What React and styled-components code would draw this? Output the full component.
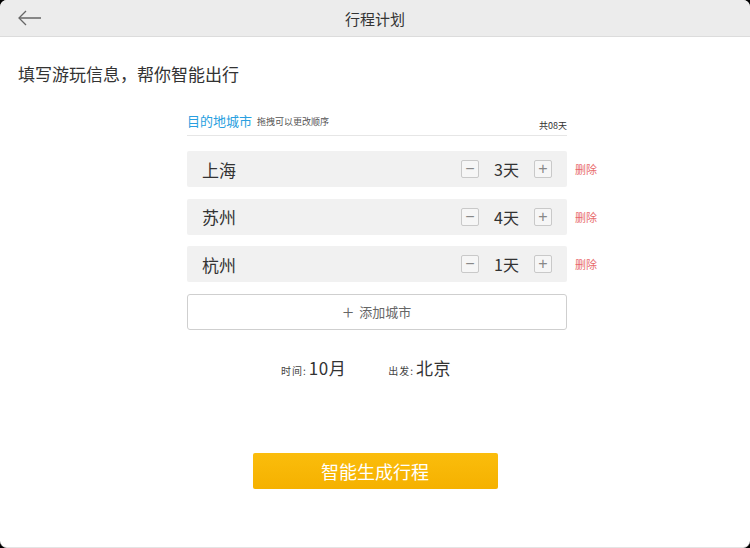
import styled, { createGlobalStyle } from 'styled-components';

const Global = createGlobalStyle`
  html, body { margin: 0; padding: 0; background: #000; }
  * { box-sizing: border-box; }
  body { font-family: "Noto Sans CJK SC", "Liberation Sans", sans-serif; }
`;

const cities = [
  { name: '上海', days: 3 },
  { name: '苏州', days: 4 },
  { name: '杭州', days: 1 },
];

export default function App() {
  return (
    <>
      <Global />
      <Screen>
        <Header>
          <Back>
            <svg width="24" height="16" viewBox="0 0 24 16" fill="none" stroke="#666" strokeWidth="1.3">
              <path d="M1 8 H23" />
              <path d="M8 1 L1 8 L8 15" />
            </svg>
          </Back>
          <Title>行程计划</Title>
        </Header>

        <Intro>填写游玩信息，帮你智能出行</Intro>

        <Column>
          <SectionHead>
            <Label>目的地城市</Label>
            <Hint>拖拽可以更改顺序</Hint>
            <Total>共08天</Total>
          </SectionHead>

          <List>
            {cities.map(c => (
              <RowWrap key={c.name}>
                <CityRow>
                  <CityName>{c.name}</CityName>
                  <Stepper>
                    <StepBtn>−</StepBtn>
                    <Days>{c.days}天</Days>
                    <StepBtn>+</StepBtn>
                  </Stepper>
                </CityRow>
                <Delete>删除</Delete>
              </RowWrap>
            ))}
            <AddCity><span className="plus">+</span>添加城市</AddCity>
          </List>

          <Meta>
            <MetaItem><small>时间:</small>10月</MetaItem>
            <MetaItem><small>出发:</small>北京</MetaItem>
          </Meta>
        </Column>

        <Footer>
          <Generate>智能生成行程</Generate>
        </Footer>
      </Screen>
    </>
  );
}

const Screen = styled.div`
  width: 750px;
  height: 548px;
  background: #fff;
  border-radius: 7px;
  overflow: hidden;
  display: flex;
  flex-direction: column;
  border-bottom: 1px solid #e4e4e4;
`;

const Header = styled.div`
  position: relative;
  height: 37px;
  flex: none;
  background: #ececec;
  border-bottom: 1px solid #dcdcdc;
  display: flex;
  align-items: center;
  justify-content: center;
`;

const Back = styled.div`
  position: absolute;
  left: 18px;
  top: 10px;
  display: flex;
`;

const Title = styled.div`
  font-size: 15px;
  color: #333;
`;

const Intro = styled.div`
  padding: 26px 0 0 18px;
  font-size: 17px;
  color: #333;
  line-height: 22px;
`;

const Column = styled.div`
  width: 380px;
  margin: 28px 0 0 187px;
`;

const SectionHead = styled.div`
  display: flex;
  align-items: flex-end;
  border-bottom: 1px solid #e6e6e6;
  padding-bottom: 3px;
`;

const Label = styled.span`
  color: #2a9fe0;
  font-size: 13px;
  line-height: 16px;
  margin-bottom: 3px;
`;

const Hint = styled.span`
  font-size: 9px;
  color: #555;
  margin: 0 0 4px 5px;
`;

const Total = styled.span`
  margin-left: auto;
  font-size: 9px;
  color: #333;
  line-height: 12px;
`;

const List = styled.div`
  margin-top: 15px;
  display: flex;
  flex-direction: column;
  gap: 11.5px;
`;

const RowWrap = styled.div`
  position: relative;
`;

const CityRow = styled.div`
  height: 36px;
  background: #f1f1f1;
  border-radius: 2px;
  display: flex;
  align-items: center;
  padding: 0 15px 0 15px;
`;

const CityName = styled.div`
  font-size: 17px;
  color: #333;
`;

const Stepper = styled.div`
  margin-left: auto;
  display: flex;
  align-items: center;
`;

const StepBtn = styled.div`
  width: 18px;
  height: 18px;
  border: 1px solid #c9c9c9;
  border-radius: 2px;
  background: #f6f6f6;
  color: #888;
  font-family: "Liberation Sans", sans-serif;
  font-size: 16px;
  line-height: 15px;
  text-align: center;
`;

const Days = styled.div`
  width: 55px;
  text-align: center;
  font-size: 16px;
  color: #333;
`;

const Delete = styled.div`
  position: absolute;
  left: 388px;
  top: 10px;
  font-size: 11px;
  color: #e86a6a;
  white-space: nowrap;
`;

const AddCity = styled.div`
  height: 36px;
  border: 1px solid #cfcfcf;
  border-radius: 3px;
  background: #fff;
  display: flex;
  align-items: center;
  justify-content: center;
  font-size: 13px;
  color: #666;
  .plus {
    font-size: 20px;
    font-weight: 300;
    margin-right: 6px;
    line-height: 1;
  }
`;

const Meta = styled.div`
  display: flex;
  justify-content: center;
  gap: 42px;
  margin-top: 25px;
  padding-right: 22px;
`;

const MetaItem = styled.div`
  font-size: 17px;
  color: #333;
  display: flex;
  align-items: baseline;
  letter-spacing: 0.5px;
  small {
    font-size: 10px;
    color: #444;
    margin-right: 2px;
    letter-spacing: 1px;
  }
`;

const Footer = styled.div`
  display: flex;
  justify-content: center;
  margin-top: 73px;
`;

const Generate = styled.div`
  width: 245px;
  height: 36px;
  border-radius: 2px;
  background: linear-gradient(#fbbd0c, #f5b100);
  color: #fff;
  font-size: 18px;
  display: flex;
  align-items: center;
  justify-content: center;
`;
